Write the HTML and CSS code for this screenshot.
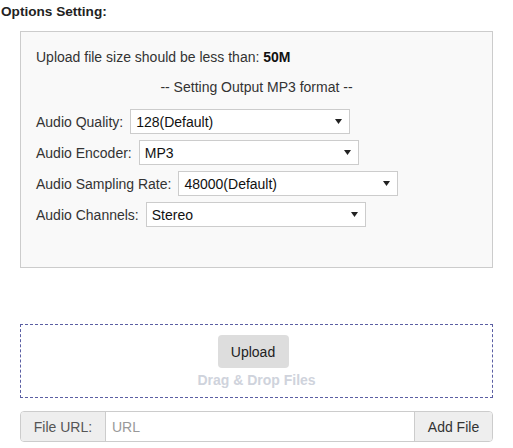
FILE: index.html
```html
<!DOCTYPE html>
<html>
<head>
<meta charset="utf-8">
<link rel="stylesheet" href="styles.css">
</head>
<body>
<h3 class="title">Options Setting:</h3>
<div class="panel">
  <p class="limit">Upload file size should be less than: <b>50M</b></p>
  <p class="format">-- Setting Output MP3 format --</p>
  <div class="rows">
    <div class="row"><span class="label">Audio Quality:</span><div class="select"><span>128(Default)</span><svg width="7" height="5" viewBox="0 0 7 5"><path d="M0 0H7L3.5 5Z" fill="#222"/></svg></div></div>
    <div class="row"><span class="label">Audio Encoder:</span><div class="select"><span>MP3</span><svg width="7" height="5" viewBox="0 0 7 5"><path d="M0 0H7L3.5 5Z" fill="#222"/></svg></div></div>
    <div class="row"><span class="label">Audio Sampling Rate:</span><div class="select"><span>48000(Default)</span><svg width="7" height="5" viewBox="0 0 7 5"><path d="M0 0H7L3.5 5Z" fill="#222"/></svg></div></div>
    <div class="row"><span class="label">Audio Channels:</span><div class="select"><span>Stereo</span><svg width="7" height="5" viewBox="0 0 7 5"><path d="M0 0H7L3.5 5Z" fill="#222"/></svg></div></div>
  </div>
</div>
<div class="dropzone">
  <button class="upload">Upload</button>
  <div class="drag">Drag &amp; Drop Files</div>
</div>
<div class="urlgroup">
  <span class="addon">File URL:</span>
  <span class="urlinput">URL</span>
  <span class="addbtn">Add File</span>
</div>
</body>
</html>
```
FILE: styles.css
```css
html, body {
  margin: 0;
  padding: 0;
  background: #fff;
}
body {
  font-family: "Liberation Sans", Arial, sans-serif;
  font-size: 14px;
  color: #333;
}
.title {
  margin: 0;
  padding-left: 1px;
  font-size: 13.6px;
  line-height: 24px;
  font-weight: bold;
  color: #222;
}
.panel {
  margin: 7px 0 0 20px;
  width: 473px;
  box-sizing: border-box;
  background: #f9f9f9;
  border: 1px solid #ccc;
  padding: 16px 15px 40px 15px;
}
.panel p {
  margin: 0;
  line-height: 18px;
}
.limit b {
  color: #111;
}
.format {
  margin-top: 12px !important;
  text-align: center;
}
.rows {
  margin-top: 13px;
  display: flex;
  flex-direction: column;
  gap: 6px;
}
.row {
  display: flex;
  align-items: center;
  height: 25px;
}
.label {
  margin-right: 7px;
}
.select {
  width: 220px;
  height: 25px;
  box-sizing: border-box;
  border: 1px solid #ccc;
  background: #fff;
  display: flex;
  align-items: center;
  justify-content: space-between;
  padding: 0 7px 0 5px;
  color: #111;
}
.dropzone {
  margin: 56px 0 0 20px;
  width: 473px;
  height: 74px;
  box-sizing: border-box;
  border: 1px dashed #5b5fa3;
  display: flex;
  flex-direction: column;
  align-items: center;
  padding-top: 10px;
}
.upload {
  width: 71px;
  height: 33px;
  border: none;
  border-radius: 4px;
  background: #ddd;
  font-family: "Liberation Sans", Arial, sans-serif;
  font-size: 14px;
  color: #222;
  margin-right: 7px;
  padding: 0;
}
.drag {
  margin-top: 3px;
  font-weight: bold;
  color: #cfd3dc;
  line-height: 18px;
}
.urlgroup {
  margin: 13px 0 0 20px;
  width: 473px;
  height: 31px;
  box-sizing: border-box;
  border: 1px solid #ccc;
  border-radius: 4px;
  display: flex;
  overflow: hidden;
}
.addon {
  width: 84px;
  background: #eee;
  border-right: 1px solid #ccc;
  display: flex;
  align-items: center;
  justify-content: center;
  color: #555;
}
.urlinput {
  flex: 1;
  display: flex;
  align-items: center;
  padding-left: 6px;
  color: #999;
}
.addbtn {
  width: 77px;
  background: #eee;
  border-left: 1px solid #ccc;
  display: flex;
  align-items: center;
  justify-content: center;
  color: #333;
}
```
